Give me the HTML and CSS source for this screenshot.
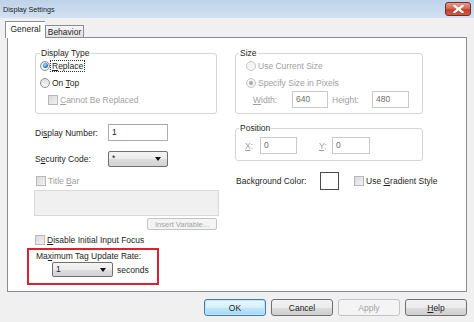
FILE: index.html
```html
<!DOCTYPE html>
<html>
<head>
<meta charset="utf-8">
<title>Display Settings</title>
<link rel="stylesheet" href="styles.css">
</head>
<body>
<div class="window">
  <div class="titlebar">
    <span class="title">Display Settings</span>
    <div class="close"><svg width="11" height="8" viewBox="0 0 11 8"><path d="M1.5 0.8 L9.5 7.2 M9.5 0.8 L1.5 7.2" stroke="#fff" stroke-width="2.2" stroke-linecap="square"/></svg></div>
  </div>
  <div class="tabs">
    <div class="tab active">General</div>
    <div class="tab">Behavior</div>
  </div>
  <div class="panel">
    <div class="col left">
      <fieldset class="group type">
        <legend>Display Type</legend>
        <div class="opt first"><span class="radio on"></span><span class="focus"><u>R</u>eplace</span></div>
        <div class="opt"><span class="radio"></span><span>On <u>T</u>op</span></div>
        <div class="opt sub disabled"><span class="check dis"></span><span><u>C</u>annot Be Replaced</span></div>
      </fieldset>
      <div class="field num"><span class="lbl">Di<u>s</u>play Number:</span><div class="input">1</div></div>
      <div class="field sec"><span class="lbl">S<u>e</u>curity Code:</span><div class="combo sec-combo"><span class="val">*</span><span class="arrow"></span></div></div>
      <div class="opt row-title disabled"><span class="check dis"></span><span>Title <u>B</u>ar</span></div>
      <div class="textarea"></div>
      <div class="insert-row"><div class="btn small disabled-btn">Insert Variable...</div></div>
      <div class="opt row-focus"><span class="check dis"></span><span><u>D</u>isable Initial Input Focus</span></div>
      <div class="highlight">
        <div class="hl-label">Ma<u>x</u>imum Tag Update Rate:</div>
        <div class="hl-row"><div class="combo rate"><span class="val">1</span><span class="arrow"></span></div><span class="secs">seconds</span></div>
      </div>
    </div>
    <div class="col right">
      <fieldset class="group size">
        <legend>Size</legend>
        <div class="opt first disabled ind"><span class="radio dis"></span><span>Use Current Size</span></div>
        <div class="opt disabled ind"><span class="radio dis ondis"></span><span>Specify Size in Pixels</span></div>
        <div class="wh disabled">
          <span class="wlbl"><u>W</u>idth:</span><div class="input dinput w1">640</div>
          <span class="hlbl">Height:</span><div class="input dinput w2">480</div>
        </div>
      </fieldset>
      <fieldset class="group pos">
        <legend>Position</legend>
        <div class="xy disabled">
          <span class="xlbl"><u>X</u>:</span><div class="input dinput x1">0</div>
          <span class="ylbl"><u>Y</u>:</span><div class="input dinput y1">0</div>
        </div>
      </fieldset>
      <div class="bg-row">
        <span class="bglbl">Background Color:</span>
        <div class="swatch"></div>
        <span class="check dis grad"></span><span class="gradtxt">Use <u>G</u>radient Style</span>
      </div>
    </div>
  </div>
  <div class="buttons">
    <div class="btn dlg ok">OK</div>
    <div class="btn dlg">Cancel</div>
    <div class="btn dlg disabled-btn">Apply</div>
    <div class="btn dlg"><u>H</u>elp</div>
  </div>
</div>
</body>
</html>
```

FILE: styles.css
```css
* { box-sizing: border-box; }
html, body { margin: 0; padding: 0; }
body {
  width: 474px; height: 322px; overflow: hidden;
  background: #f0f0f0;
  font-family: "Liberation Sans", Arial, sans-serif;
  font-size: 8.5px; color: #1e1e1e;
}
u { text-decoration: underline; text-underline-offset: 1px; }
.window { width: 474px; height: 322px; display: flex; flex-direction: column; }

.titlebar {
  height: 18px; flex: none;
  background: linear-gradient(#bed2ea, #d2e0f1);
  display: flex; align-items: center; justify-content: space-between;
  padding: 0 3px 0 3px;
}
.title { font-size: 7.2px; color: #1a1a1a; }
.close {
  width: 26px; height: 14px;
  border: 1px solid #7b2c22; border-radius: 3px;
  background: linear-gradient(#e29a8c 0%, #d46a58 45%, #c2412d 55%, #c85a44 100%);
  display: flex; align-items: center; justify-content: center;
}

.tabs {
  height: 16px; margin-top: 3px; padding-left: 5px; flex: none;
  display: flex; align-items: flex-end;
}
.tab {
  height: 12px; width: 39px;
  border: 1px solid #898c95; border-bottom: none;
  background: linear-gradient(#f6f6f6, #e3e3e3);
  display: flex; align-items: center; justify-content: center;
  font-size: 8.5px;
}
.tab.active {
  height: 17px; width: 40px; margin-bottom: -1px;
  background: #fff; position: relative; z-index: 1;
  border-right: none;
  padding-bottom: 2px;
}

.panel {
  margin-left: 7px; width: 460px; height: 255px; flex: none;
  border: 1px solid #898c95; background: #fff;
  display: flex; padding: 10px 0 0 27px;
}
.col { display: flex; flex-direction: column; }
.left { width: 183px; }
.right { width: 189px; margin-left: 17px; }

fieldset.group {
  margin: 0; padding: 0 0 5px 0; min-width: 0;
  border: 1px solid #d5d5d5; border-radius: 3px;
}
legend { padding: 0 1px; line-height: 10px; height: 10px; }
.type legend { margin-left: 4px; }
fieldset.type { width: 182px; }
fieldset.size, fieldset.pos { width: 188px; }
.size legend, .pos legend { margin-left: 3px; }
fieldset.group.pos { margin-top: 9px; padding-bottom: 6px; }

.opt { display: flex; align-items: center; height: 17px; padding-left: 4px; white-space: nowrap; }
.opt.first { margin-top: -1px; }
.opt.sub { padding-left: 12px; }
.opt.ind { padding-left: 10px; }
.disabled { color: #a0a0a0; }

.radio {
  width: 10px; height: 10px; border-radius: 50%; flex: none;
  border: 1px solid #8e8f8f;
  background: linear-gradient(#dedede, #f8f8f8);
  margin-right: 2px; position: relative;
}
.radio.on::after {
  content: ""; position: absolute; left: 1.5px; top: 1.5px;
  width: 5px; height: 5px; border-radius: 50%;
  background: radial-gradient(circle at 40% 35%, #a6dcff 0%, #2f87d6 55%, #0c4f92 100%);
}
.radio.dis { border-color: #c6c6c6; background: #f4f4f4; }
.radio.ondis::after {
  content: ""; position: absolute; left: 2px; top: 2px;
  width: 4px; height: 4px; border-radius: 50%; background: #a9a9a9;
}
.focus { outline: 1px dotted #333; outline-offset: 0px; padding: 0 1px; margin-left: -1px; }

.check {
  width: 10px; height: 10px; flex: none; margin-right: 2px;
  border: 1px solid #8f8f8f;
  background: linear-gradient(135deg, #dcdcdc, #f6f6f6);
}
.check.dis { border-color: #b8b8b8; background: linear-gradient(135deg, #dadada, #f2f2f2); }

.field { display: flex; align-items: center; white-space: nowrap; }
.lbl { width: 73px; flex: none; }
.num { margin-top: 10px; height: 17px; }
.sec { margin-top: 10px; height: 16px; }
.input {
  height: 17px; border: 1px solid #abadb3; border-top-color: #a3a6ad;
  background: #fff; padding: 1px 3px 0 3px; line-height: 12px; flex: none;
}
.num .input { width: 60px; }

.combo {
  height: 16px; width: 60px; flex: none;
  border: 1px solid #707070; border-radius: 2px;
  background: linear-gradient(#f4f4f4 0%, #ececec 50%, #dedede 51%, #d2d2d2 100%);
  display: flex; align-items: center; justify-content: space-between;
  padding: 0 6px 0 3px;
}
.combo .val { line-height: 12px; margin-top: -2px; }
.arrow {
  width: 0; height: 0;
  border-left: 3.5px solid transparent; border-right: 3.5px solid transparent;
  border-top: 4px solid #111;
}

.row-title { height: 14px; margin-top: 7px; padding-left: 1px; }
.textarea {
  margin-top: 2px; margin-left: -1px; width: 185px; height: 26px;
  background: #f0f0f0; border: 1px solid #d9d9d9;
}
.insert-row { margin-top: 2px; display: flex; justify-content: flex-end; padding-right: 1px; }
.btn {
  border: 1px solid #707070; border-radius: 3px;
  background: linear-gradient(#f2f2f2 0%, #ebebeb 50%, #dddddd 51%, #cfcfcf 100%);
  display: flex; align-items: center; justify-content: center;
  white-space: nowrap;
}
.btn.small { width: 70px; height: 12px; font-size: 7.5px; border-radius: 2px; }
.disabled-btn {
  border-color: #c0c4c7; background: #f4f4f4; color: #a3a3a3;
}
.row-focus { height: 14px; margin-top: 3px; padding-left: 0; }

.highlight {
  margin-top: 1px; margin-left: -8px; width: 132px; height: 37px;
  border: 2px solid #e0202c; padding-left: 7px; white-space: nowrap;
}
.hl-label { height: 12px; line-height: 12px; }
.hl-row { display: flex; align-items: center; height: 15px; }
.combo.rate { width: 61px; height: 15px; margin-left: 16px; }
.secs { margin-left: 4px; }

.wh, .xy { display: flex; align-items: center; height: 17px; white-space: nowrap; }
.wh { padding-left: 17px; }
.wlbl { width: 39px; flex: none; }
.dinput { color: #6d6d6d; border-color: #c9c9c9; }
.w1 { width: 36px; }
.hlbl { margin-left: 4px; width: 40px; flex: none; }
.w2 { width: 37px; }

.xy { margin-top: 4px; padding-left: 9px; }
.xlbl { width: 15px; flex: none; }
.x1 { width: 37px; }
.ylbl { margin-left: 22px; width: 13px; flex: none; }
.y1 { width: 38px; }

.bg-row {
  display: flex; align-items: center; height: 18px; margin-top: 11px; padding-left: 1px;
  white-space: nowrap; width: 240px;
}
.bglbl { width: 84px; flex: none; }
.swatch { width: 19px; height: 18px; border: 1px solid #4a4a4a; background: #fff; flex: none; }
.grad { margin-left: 15px; }
.gradtxt { flex: none; }

.buttons {
  display: flex; justify-content: flex-end; gap: 5px;
  margin-top: 7px; padding-right: 7px;
}
.btn.dlg { width: 62px; height: 17px; }
.btn.ok {
  border-color: #3c7fb1;
  background: linear-gradient(#eaf6fd 0%, #d9f0fc 50%, #bee6fd 51%, #a7d9f5 100%);
  box-shadow: inset 0 0 0 1px #bfe3f7;
}
```
